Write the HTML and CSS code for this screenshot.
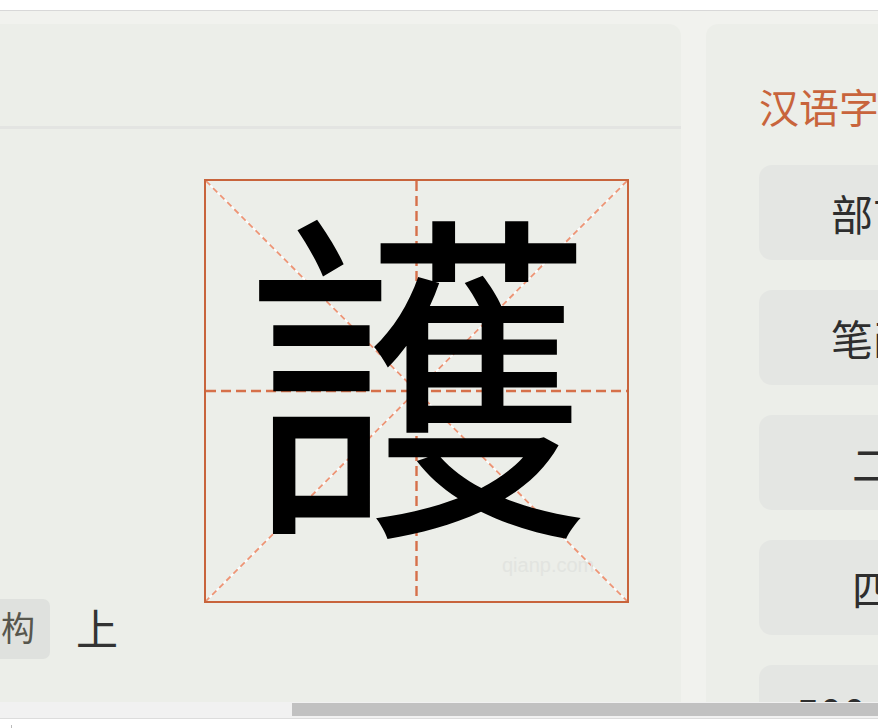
FILE: index.html
```html
<!DOCTYPE html>
<html lang="zh">
<head>
<meta charset="utf-8">
<title>護</title>
<link rel="stylesheet" href="styles.css">
</head>
<body>
<div class="topbar"></div>
<div class="frame">
  <div class="viewport">
    <div class="row">
      <section class="main-card">
        <div class="card-head"></div>
        <div class="card-body">
          <div class="info">
            <div class="info-row">
              <span class="tag">结构</span>
              <span class="value">上</span>
            </div>
          </div>
          <div class="grid-box">
            <svg class="grid-lines" viewBox="0 0 421 420" preserveAspectRatio="none" aria-hidden="true">
              <line class="diag-under" x1="0" y1="0" x2="421" y2="420"/>
              <line class="diag-under" x1="421" y1="0" x2="0" y2="420"/>
              <line class="diag" x1="0" y1="0" x2="421" y2="420"/>
              <line class="diag" x1="421" y1="0" x2="0" y2="420"/>
              <line class="axis" x1="210.5" y1="0" x2="210.5" y2="420"/>
              <line class="axis" x1="0" y1="210" x2="421" y2="210"/>
            </svg>
            <div class="glyph">護</div>
            <div class="watermark">qianp.com</div>
          </div>
        </div>
      </section>
      <aside class="side-card">
        <h2 class="side-title">汉语字典</h2>
        <ul class="side-links">
          <li class="side-link">部首查字</li>
          <li class="side-link">笔画查字</li>
          <li class="side-link">二简字</li>
          <li class="side-link">四角码</li>
          <li class="side-link">500个常用字</li>
        </ul>
      </aside>
    </div>
  </div>
  <div class="hscroll"><div class="thumb"></div></div>
</div>
<div class="caret"></div>
</body>
</html>
```
FILE: styles.css
```css
html, body {
  margin: 0;
  padding: 0;
  background: #ffffff;
  font-family: "Noto Sans CJK SC", "Noto Sans", sans-serif;
  overflow: hidden;
}

.topbar {
  height: 10px;
  background: #ffffff;
}

.frame {
  border-top: 1px solid #d8d8d8;
  border-bottom: 1px solid #dcdcdc;
}

.viewport {
  height: 691px;
  box-sizing: border-box;
  padding-top: 13px;
  background: #f1f2ee;
  overflow: hidden;
}

.row {
  display: flex;
  gap: 25px;
  margin-left: -100px;
  align-items: flex-start;
}

.main-card {
  flex: 0 0 781px;
  min-height: 800px;
  background: #eceee9;
  border-radius: 12px;
}

.card-head {
  height: 102px;
  border-bottom: 3px solid #e3e4e2;
}

.card-body {
  display: flex;
  padding: 50px 52px 0 52px;
}

.info {
  flex: 0 0 252px;
  padding-top: 417px;
}

.info-row {
  display: flex;
  align-items: center;
  gap: 26px;
}

.tag {
  display: flex;
  align-items: center;
  height: 60px;
  padding: 0 15px 4px 15px;
  background: #dfe1de;
  border-radius: 7px;
  font-size: 34px;
  color: #57564d;
  box-sizing: border-box;
}

.value {
  font-size: 42px;
  color: #333333;
  padding-bottom: 4px;
}

.grid-box {
  position: relative;
  flex: 0 0 auto;
  width: 421px;
  height: 420px;
  border: 2px solid #c8643c;
  display: flex;
  align-items: center;
  justify-content: center;
}

.grid-lines {
  position: absolute;
  left: 0;
  top: 0;
  width: 100%;
  height: 100%;
}

.axis {
  stroke: #d6704a;
  stroke-width: 2.4;
  stroke-dasharray: 10 5;
}

.diag-under {
  stroke: #ffffff;
  stroke-width: 1.8;
  opacity: 0.9;
}

.diag {
  stroke: #ec9475;
  stroke-width: 1.8;
  stroke-dasharray: 6 4;
}

.glyph {
  position: relative;
  font-family: "Noto Sans CJK TC", "Noto Sans CJK SC", sans-serif;
  font-size: 345px;
  line-height: 1;
  color: #000000;
  padding-bottom: 62px;
  padding-left: 2px;
}

.watermark {
  position: absolute;
  left: 296px;
  top: 374px;
  font-family: "Liberation Sans", Arial, sans-serif;
  font-size: 20px;
  line-height: 20px;
  color: #e2e4e0;
}

.side-card {
  flex: 0 0 420px;
  min-height: 800px;
  box-sizing: border-box;
  padding: 61px 0 0 53px;
  background: #eceee9;
  border-radius: 12px;
}

.side-title {
  margin: 0;
  font-size: 40px;
  line-height: 42px;
  font-weight: 400;
  color: #c8643c;
}

.side-links {
  list-style: none;
  margin: 38px 0 0 0;
  padding: 0;
  display: flex;
  flex-direction: column;
  gap: 30px;
}

.side-link {
  width: 312px;
  height: 95px;
  border-radius: 13px;
  background: #e4e6e3;
  display: flex;
  align-items: center;
  justify-content: center;
  font-size: 42px;
  color: #2e2e2e;
  white-space: nowrap;
}

.hscroll {
  height: 16px;
  box-sizing: border-box;
  padding-top: 1px;
  background: #f1f1f1;
}

.thumb {
  height: 13px;
  margin-left: 292px;
  background: #c1c1c1;
}

.caret {
  width: 1px;
  height: 4px;
  margin: 6px 0 0 11px;
  background: #bbbbbb;
}
```
